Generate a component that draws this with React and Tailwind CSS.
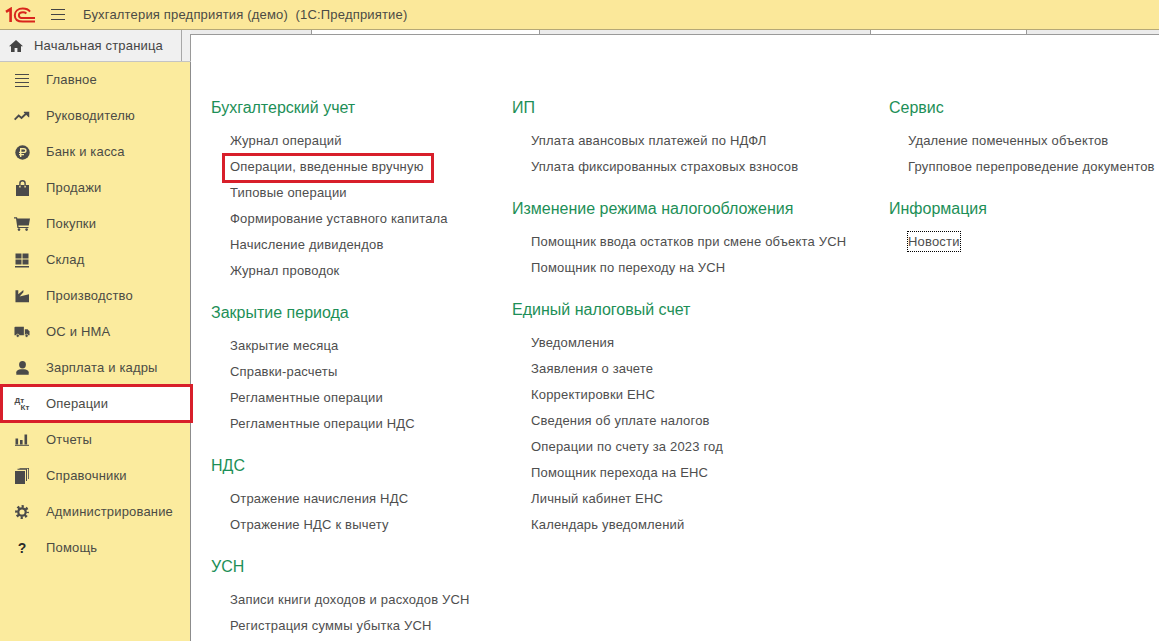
const FONT = "font-['Liberation_Sans',Arial,sans-serif]"

function Logo() {
  return (
    <svg width="30" height="16" viewBox="0 0 30 16" fill="none" stroke="#d9251c">
      <path d="M1 4.8 L5.6 2 V15" strokeWidth="2.6" />
      <path d="M25 4.6 C23.5 2.6 20.8 1.6 17.8 1.6 C13 1.6 9.8 4.2 9.8 8.2 C9.8 12.4 13 14.6 17.8 14.6 H30" strokeWidth="2" />
      <path d="M21.4 6.4 C20.5 5.6 19.3 5.2 18 5.2 C15.6 5.2 13.9 6.4 13.9 8.2 C13.9 10 15.6 11.1 18 11.1 H30" strokeWidth="2" />
    </svg>
  )
}

function HomeIcon() {
  return (
    <svg width="14" height="12" viewBox="0 0 14 12" fill="#444">
      <path d="M7 0 L14 6.3 H12 V12 H8.4 V8 H5.6 V12 H2 V6.3 H0 Z" />
    </svg>
  )
}

const ic = '#4a4a4a'

const icons = {
  main: (
    <svg width="14" height="13" viewBox="0 0 14 13" fill="none" stroke={ic}>
      <path d="M0 0.5H14M0 4.5H14M0 8.5H14M0 12.5H14" />
    </svg>
  ),
  chart: (
    <svg width="16" height="10" viewBox="0 0 17 10" fill="none" stroke={ic} strokeWidth="2">
      <path d="M0.7 8.8 L5 4.5 L8 7 L13.5 1.8" />
      <path d="M10.5 0.6H16.2V6.2H15.5L10.5 1.2Z" fill={ic} stroke="none" />
    </svg>
  ),
  bank: (
    <svg width="15" height="15" viewBox="0 0 15 15">
      <circle cx="7.5" cy="7.5" r="7.2" fill={ic} />
      <path d="M4 9.6H9M5.7 12V3.8H8.6C10.1 3.8 10.9 4.6 10.9 5.8C10.9 7 10.1 7.4 8.6 7.4H4" fill="none" stroke="#fbeca0" strokeWidth="1.4" />
    </svg>
  ),
  sales: (
    <svg width="13" height="16" viewBox="0 0 13 16">
      <path d="M0 5H3.2V7.5H4.6V5H8.4V7.5H9.8V5H13V16H0Z" fill={ic} />
      <path d="M3.9 6V3.2C3.9 1.8 5 0.8 6.5 0.8C8 0.8 9.1 1.8 9.1 3.2V6" fill="none" stroke={ic} strokeWidth="1.4" />
    </svg>
  ),
  cart: (
    <svg width="16" height="14" viewBox="0 0 16 14" fill={ic}>
      <path d="M0 0.3H3L3.4 1.5H16L14.8 8.5H4.3L4.6 10H14.5V11H3.4L2 1.4H0Z" />
      <circle cx="5" cy="12.6" r="1.3" />
      <circle cx="12.6" cy="12.6" r="1.3" />
    </svg>
  ),
  stock: (
    <svg width="14" height="15" viewBox="0 0 14 15" fill={ic}>
      <rect x="0.5" y="0.5" width="6" height="5" />
      <rect x="7.5" y="0.5" width="6" height="5" />
      <rect x="0.5" y="6.5" width="6" height="5" />
      <rect x="7.5" y="6.5" width="6" height="5" />
      <rect x="0" y="13" width="14" height="1.5" />
    </svg>
  ),
  factory: (
    <svg width="14" height="14" viewBox="0 0 15 14" fill={ic}>
      <path d="M0.5 0.8H3.5V5L9 0.5V3L5 7.5L15 5V13.8H0.5Z" />
    </svg>
  ),
  truck: (
    <svg width="16" height="12" viewBox="0 0 17 12" fill={ic}>
      <path d="M0.5 1.5C0.5 0.8 0.8 0.5 1.5 0.5H10.5V9.5H0.5Z" />
      <path d="M11.5 3H14.5L16.5 5.5V9.5H11.5Z" />
      <circle cx="4" cy="10" r="1.7" stroke="#fbeca0" strokeWidth="0.7" />
      <circle cx="13.4" cy="10" r="1.7" stroke="#fbeca0" strokeWidth="0.7" />
    </svg>
  ),
  user: (
    <svg width="13" height="14" viewBox="0 0 13 14" fill={ic}>
      <ellipse cx="6.5" cy="3.8" rx="3.4" ry="3.7" />
      <path d="M0.3 13.7V11.2C0.3 9.4 2.6 8.5 4.6 8.2H8.4C10.4 8.5 12.7 9.4 12.7 11.2V13.7Z" />
    </svg>
  ),
  ops: (
    <div className="relative h-[15px] w-[15px] text-[#4a4a4a] text-[8px] leading-[8px] font-bold">
      <span className="absolute left-0 top-0">Дт</span>
      <span className="absolute left-[6px] top-[7px]">Кт</span>
    </div>
  ),
  reports: (
    <svg width="14" height="12" viewBox="0 0 14 12" fill={ic}>
      <rect x="0.5" y="4.5" width="2.6" height="6" />
      <rect x="5" y="6" width="2.6" height="4.5" />
      <rect x="9.5" y="0.5" width="2.6" height="10" />
      <rect x="0" y="10.8" width="14" height="1" />
    </svg>
  ),
  refs: (
    <svg width="14" height="16" viewBox="0 0 14 16" fill={ic}>
      <rect x="0" y="3" width="10" height="13" />
      <path d="M2.5 1.8V0.8H12V13H11V1.8Z" />
      <path d="M4.5 0H14V11H13.2V0.8H4.5Z" />
    </svg>
  ),
  gear: (
    <svg width="14" height="14" viewBox="0 0 15 15" fill="none" stroke={ic}>
      <circle cx="7.5" cy="7.5" r="4" strokeWidth="2.4" />
      <circle cx="7.5" cy="7.5" r="6" strokeWidth="2.8" strokeDasharray="2.36 2.36" strokeDashoffset="1.18" />
    </svg>
  ),
  help: <span className="text-[14px] leading-none font-bold text-[#2b2b2b]">?</span>,
}

const menu = [
  ['main', 'Главное'],
  ['chart', 'Руководителю'],
  ['bank', 'Банк и касса'],
  ['sales', 'Продажи'],
  ['cart', 'Покупки'],
  ['stock', 'Склад'],
  ['factory', 'Производство'],
  ['truck', 'ОС и НМА'],
  ['user', 'Зарплата и кадры'],
  ['ops', 'Операции'],
  ['reports', 'Отчеты'],
  ['refs', 'Справочники'],
  ['gear', 'Администрирование'],
  ['help', 'Помощь'],
]

const col1 = [
  ['Бухгалтерский учет', ['Журнал операций', 'Операции, введенные вручную', 'Типовые операции', 'Формирование уставного капитала', 'Начисление дивидендов', 'Журнал проводок']],
  ['Закрытие периода', ['Закрытие месяца', 'Справки-расчеты', 'Регламентные операции', 'Регламентные операции НДС']],
  ['НДС', ['Отражение начисления НДС', 'Отражение НДС к вычету']],
  ['УСН', ['Записи книги доходов и расходов УСН', 'Регистрация суммы убытка УСН']],
]

const col2 = [
  ['ИП', ['Уплата авансовых платежей по НДФЛ', 'Уплата фиксированных страховых взносов']],
  ['Изменение режима налогообложения', ['Помощник ввода остатков при смене объекта УСН', 'Помощник по переходу на УСН']],
  ['Единый налоговый счет', ['Уведомления', 'Заявления о зачете', 'Корректировки ЕНС', 'Сведения об уплате налогов', 'Операции по счету за 2023 год', 'Помощник перехода на ЕНС', 'Личный кабинет ЕНС', 'Календарь уведомлений']],
]

const col3 = [
  ['Сервис', ['Удаление помеченных объектов', 'Групповое перепроведение документов']],
  ['Информация', ['Новости']],
]

function NavRow({ icon, label }) {
  const active = label === 'Операции'
  return (
    <div className={`relative flex h-9 shrink-0 items-center ${active ? 'bg-white' : ''}`}>
      <div className="flex w-[44px] justify-center">{icons[icon]}</div>
      <span className="ml-[2px] text-[13px] tracking-[0.18px] text-[#4b4b45]">{label}</span>
      {active && <div className="absolute -right-[3px] left-0 -top-[2px] -bottom-[1px] border-[3px] border-[#d81f2a]" />}
    </div>
  )
}

function Section({ title, items }) {
  return (
    <div className="pb-[16px]">
      <div className="h-[26px] text-[16px] leading-[26px] text-[#1d8f57]">{title}</div>
      <div className="mt-[7px] flex flex-col pl-[19px]">
        {items.map(t => (
          <div key={t} className="relative h-[26px] whitespace-nowrap text-[13px] leading-[26px] tracking-[0.18px] text-[#4e4e4e]">
            {t === 'Новости' ? (
              <span className="-ml-px inline-block h-[21px] border border-dotted border-black leading-[19px]">{t}</span>
            ) : t}
            {t === 'Операции, введенные вручную' && (
              <div className="absolute -left-[8px] top-[-1px] h-[30px] w-[212px] border-[3px] border-[#d81f2a]" />
            )}
          </div>
        ))}
      </div>
    </div>
  )
}

export default function App() {
  return (
    <div className={`flex h-[641px] w-[1159px] flex-col overflow-hidden bg-white ${FONT}`}>
      <header className="flex h-[30px] shrink-0 items-center border-b border-[#b5a877] bg-[#fbe89a] pl-[5px]">
        <Logo />
        <svg className="ml-[16px]" width="14" height="11" viewBox="0 0 14 11" fill="none" stroke="#444">
          <path d="M0 0.5H14M0 5.5H14M0 10.5H14" />
        </svg>
        <span className="ml-[18px] whitespace-pre text-[13px] tracking-[0.18px] text-[#4b4b45]">Бухгалтерия предприятия (демо)  (1С:Предприятие)</span>
      </header>

      <div className="flex min-h-0 flex-1">
        <aside className="flex w-[191px] shrink-0 flex-col">
          <div className="flex h-[32px] shrink-0 border-b border-[#c4c4c4] bg-[#f0f0f0]">
            <div className="flex w-[182px] items-center border-r border-[#a8a8a8] pl-[9px]">
              <HomeIcon />
              <span className="ml-[11px] text-[13px] tracking-[0.18px] text-[#444]">Начальная страница</span>
            </div>
            <div className="flex-1 pt-[4px]">
              <div className="h-full border-r border-[#9a9a9a]" />
            </div>
          </div>
          <nav className="flex flex-1 flex-col border-r border-[#8c8c8c] bg-[#fbeb9e]">
            {menu.map(([icon, label]) => <NavRow key={label} icon={icon} label={label} />)}
          </nav>
        </aside>

        <div className="flex min-w-0 flex-1 flex-col">
          <div className="flex h-[5px] shrink-0 border-b border-[#9a9a9a] bg-[#ececec]">
            <div className="w-[121px] border-r border-[#9a9a9a]" />
            <div className="w-[228px] border-r border-[#9a9a9a] bg-white" />
            <div className="w-[331px] border-r border-[#9a9a9a]" />
            <div className="w-[156px] border-r border-[#9a9a9a] bg-white" />
          </div>
          <main className="flex min-h-0 flex-1 pl-[20px] pt-[60px]">
            <div className="w-[301px] shrink-0">
              {col1.map(([t, items]) => <Section key={t} title={t} items={items} />)}
            </div>
            <div className="w-[377px] shrink-0">
              {col2.map(([t, items]) => <Section key={t} title={t} items={items} />)}
            </div>
            <div className="shrink-0">
              {col3.map(([t, items]) => <Section key={t} title={t} items={items} />)}
            </div>
          </main>
        </div>
      </div>
    </div>
  )
}
